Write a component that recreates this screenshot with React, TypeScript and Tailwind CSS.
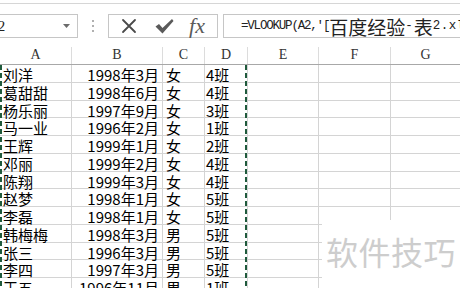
import React from 'react';

// one row of the sheet: name, birth month, gender, class
const rows: string[][] = [
    ['刘洋', '1998年3月', '女', '4班'],
    ['葛甜甜', '1998年6月', '女', '4班'],
    ['杨乐丽', '1997年9月', '女', '3班'],
    ['马一业', '1996年2月', '女', '1班'],
    ['王辉', '1999年1月', '女', '2班'],
    ['邓丽', '1999年2月', '女', '4班'],
    ['陈翔', '1999年3月', '女', '4班'],
    ['赵梦', '1998年1月', '女', '5班'],
    ['李磊', '1998年1月', '女', '5班'],
    ['韩梅梅', '1998年3月', '男', '5班'],
    ['张三', '1996年3月', '男', '5班'],
    ['李四', '1997年3月', '男', '5班'],
    ['王五', '1996年11月', '男', '1班'],
];

const cjk = { fontFamily: '"Noto Sans CJK SC", sans-serif' };
const mono = { fontFamily: '"Liberation Mono", "Noto Sans CJK SC", monospace' };
const serif = { fontFamily: '"Liberation Serif", serif' };

const marquee = 'absolute top-[65px] bottom-0 w-[2px] bg-[repeating-linear-gradient(to_bottom,#1f5a3c_0px,#1f5a3c_5px,transparent_5px,transparent_8px)]';

const App = () => {
    return (
        <div className="relative w-[460px] h-[288px] overflow-hidden bg-white text-black">
            {/* top edge line */}
            <div className="h-[4px] border-b border-[#d6d6d6]" />

            {/* name box + formula bar */}
            <div className="mt-[10px] flex h-[24px] items-stretch">
                <div className="ml-[-20px] flex w-[98px] items-center justify-between border border-[#c6c6c6] pl-[6px] pr-[7px]">
                    <span className="text-[15px] text-[#222]" style={serif}>A2</span>
                    <svg width="7" height="4" viewBox="0 0 7 4"><path d="M0 0h7L3.5 4z" fill="#6b6b6b" /></svg>
                </div>
                <div className="flex w-[30px] flex-col items-center justify-center gap-[3px]">
                    <span className="h-[2px] w-[2px] bg-[#b0b0b0]" />
                    <span className="h-[2px] w-[2px] bg-[#b0b0b0]" />
                    <span className="h-[2px] w-[2px] bg-[#b0b0b0]" />
                </div>
                <div className="flex w-[110px] items-center border border-[#c6c6c6]">
                    <div className="flex w-[38px] justify-center pl-[2px]">
                        <svg width="16" height="16" viewBox="0 0 16 16">
                            <path d="M2 2L14 14M14 2L2 14" stroke="#4a4a4a" strokeWidth="1.8" strokeLinecap="round" />
                        </svg>
                    </div>
                    <div className="flex w-[34px] justify-center">
                        <svg width="19" height="16" viewBox="0 0 19 16">
                            <path d="M0.5 8.5L4 6L7.5 10L17 1L18.5 3L7.5 15.5z" fill="#5a5a5a" />
                        </svg>
                    </div>
                    <div className="flex flex-1 justify-center pr-[4px]">
                        <span className="text-[22px] italic leading-none text-[#5a5a5a]" style={serif}>fx</span>
                    </div>
                </div>
                <div className="ml-[5px] flex flex-1 items-center border border-r-0 border-[#c6c6c6] pl-[17px] whitespace-nowrap text-[#222] overflow-hidden">
                    <span className="text-[12.5px] tracking-[-1.2px]" style={mono}>=VLOOKUP(A2,'[</span>
                    <span className="text-[19px] leading-none" style={cjk}>百度经验</span>
                    <span className="text-[12.5px] tracking-[1px]" style={mono}>-</span>
                    <span className="text-[19px] leading-none" style={cjk}>表</span>
                    <span className="text-[12.5px] tracking-[0.5px]" style={mono}>2.xl</span>
                </div>
            </div>

            {/* column headers */}
            <div className="mt-[9px] flex h-[18px] border-b border-[#a8a8a8] text-[14px] leading-none text-[#333]" style={serif}>
                <div className="flex w-[72px] items-end justify-center border-r border-[#dcdcdc] pb-[2px]">A</div>
                <div className="flex w-[91px] items-end justify-center border-r border-[#dcdcdc] pb-[2px]">B</div>
                <div className="flex w-[42px] items-end justify-center border-r border-[#dcdcdc] pb-[2px]">C</div>
                <div className="flex w-[43px] items-end justify-center border-r border-[#dcdcdc] pb-[2px]">D</div>
                <div className="flex w-[71px] items-end justify-center border-r border-[#dcdcdc] pb-[2px]">E</div>
                <div className="flex w-[72px] items-end justify-center border-r border-[#dcdcdc] pb-[2px]">F</div>
                <div className="flex flex-1 items-end justify-center pb-[2px]">G</div>
            </div>

            {/* data rows */}
            <div className="text-[15px] leading-[14px]" style={cjk}>
                {rows.map((r, i) => (
                    <div key={i} className="flex h-[17.75px]">
                        <div className="w-[72px] border-r border-b border-[#d4d4d4] pl-[3px] pt-[3px] whitespace-nowrap">{r[0]}</div>
                        <div className="w-[91px] border-r border-b border-[#d4d4d4] pr-[3px] pt-[3px] text-right whitespace-nowrap">{r[1]}</div>
                        <div className="w-[42px] border-r border-b border-[#d4d4d4] pl-[3px] pt-[3px]">{r[2]}</div>
                        <div className="w-[43px] border-r border-b border-[#d4d4d4] pl-[1px] pt-[3px] whitespace-nowrap">{r[3]}</div>
                        <div className="w-[71px] border-r border-b border-[#d4d4d4]" />
                        <div className="w-[72px] border-r border-b border-[#d4d4d4]" />
                        <div className="flex-1 border-b border-[#d4d4d4]" />
                    </div>
                ))}
            </div>

            {/* copy marquee */}
            <div className={`${marquee} left-0`} />
            <div className={`${marquee} left-[245px]`} />

            {/* watermark */}
            <div className="absolute left-[322px] top-[210px] right-0 bottom-0 flex items-start bg-white pl-[4px] pt-[25px]">
                <div className="absolute left-[68px] top-0 h-[10px] w-px bg-[#d4d4d4]" />
                <span className="text-[32px] leading-none tracking-[0.5px] text-[#cdcdcd]" style={cjk}>软件技巧</span>
            </div>
        </div>
    );
};

export default App;
